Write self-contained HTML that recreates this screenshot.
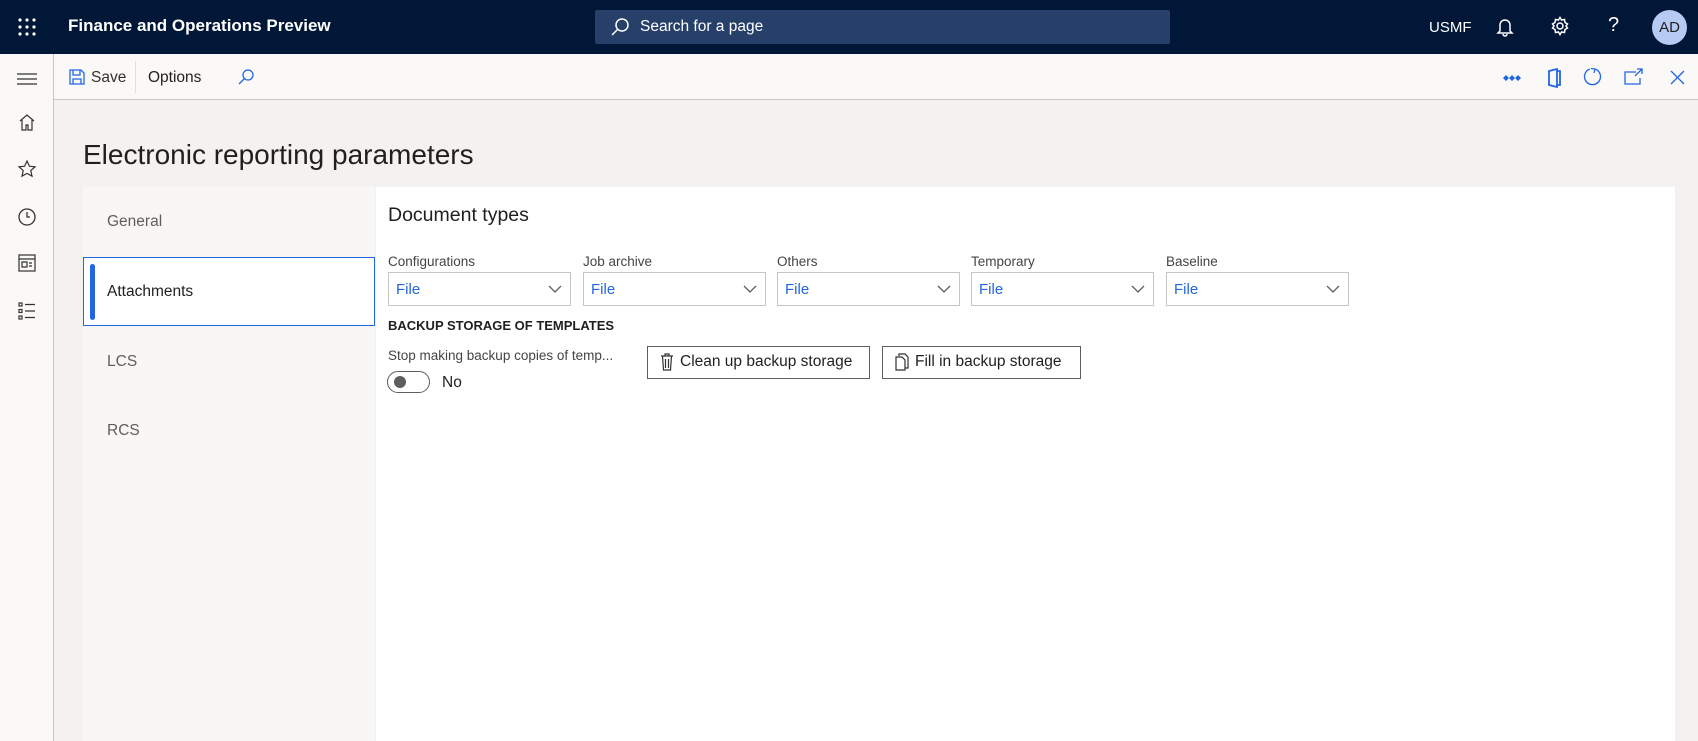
<!DOCTYPE html>
<html><head><meta charset="utf-8"><style>
*{box-sizing:border-box;margin:0;padding:0}
body{width:1698px;height:741px;overflow:hidden;background:#f3f2f1;font-family:"Segoe UI","Liberation Sans",sans-serif;color:#323130;position:relative}
.a{position:absolute}
.hdr{left:0;top:0;width:1698px;height:54px;background:#001737}
.tb{left:54px;top:54px;width:1644px;height:46px;background:#faf9f8;border-bottom:1px solid #c8c6c4}
.nav{left:0;top:54px;width:54px;height:687px;background:#faf9f8;border-right:1px solid #c8c6c4}
.dd{height:34px;width:183px;border:1px solid #c8c6c4;background:#fff;color:#2266e3;font-size:15px;padding:8px 7px}
.dd svg{position:absolute;right:8px;top:12px}
.lbl{font-size:13.5px;color:#444}
.btn{height:33px;border:1px solid #605e5c;background:#fff;font-size:15.5px;color:#201f1e;padding:6px 10px 0 12px;display:flex;gap:6px}
</style></head><body>
<div class="a hdr"></div>
<svg class="a" style="left:18px;top:18px" width="18" height="18"><g fill="#fff"><circle cx="2" cy="2" r="1.6"/><circle cx="9" cy="2" r="1.6"/><circle cx="16" cy="2" r="1.6"/><circle cx="2" cy="9" r="1.6"/><circle cx="9" cy="9" r="1.6"/><circle cx="16" cy="9" r="1.6"/><circle cx="2" cy="16" r="1.6"/><circle cx="9" cy="16" r="1.6"/><circle cx="16" cy="16" r="1.6"/></g></svg>
<div class="a" style="left:68px;top:16px;color:#fff;font-size:17px;font-weight:bold">Finance and Operations Preview</div>
<div class="a" style="left:595px;top:10px;width:575px;height:34px;background:#27406a;border-radius:2px"></div>
<svg class="a" style="left:610px;top:17px" width="20" height="20" fill="none" stroke="#fff" stroke-width="1.5"><circle cx="12" cy="8" r="6"/><path d="M8 12L2 18"/></svg>
<div class="a" style="left:640px;top:18px;color:#fff;font-size:15.5px">Search for a page</div>
<div class="a" style="left:1429px;top:19px;color:#fff;font-size:15px">USMF</div>
<svg class="a" style="left:1496px;top:17px" width="18" height="20" fill="none" stroke="#fff" stroke-width="1.5"><path d="M4 14V8a5 5 0 0110 0v6l2 2H2z M7 17a2 2 0 004 0"/></svg>
<svg class="a" style="left:1550px;top:16px" width="20" height="20" fill="none" stroke="#fff" stroke-width="1.5"><circle cx="10" cy="10" r="3"/><path d="M10 1.5l1.5 2.5 3-.5.5 3 2.5 1.5-1.5 2 1.5 2-2.5 1.5-.5 3-3-.5L10 18.5 8.5 16l-3 .5-.5-3L2.5 12 4 10 2.5 8 5 6.5l.5-3 3 .5z"/></svg>
<div class="a" style="left:1608px;top:14px;color:#fff;font-size:20px">?</div>
<div class="a" style="left:1652px;top:10px;width:35px;height:35px;border-radius:50%;background:#b5cbf3;color:#201f1e;font-size:15px;text-align:center;line-height:35px">AD</div>

<div class="a tb"></div>
<div class="a nav"></div>
<svg class="a" style="left:17px;top:72px" width="20" height="14" stroke="#323130" stroke-width="1.3"><path d="M0 2h20M0 7h20M0 12h20"/></svg>
<svg class="a" style="left:18px;top:113px" width="18" height="18" fill="none" stroke="#323130" stroke-width="1.2"><path d="M2 8L9 2l7 6M4 7v10h4v-5h2v5h4V7"/></svg>
<svg class="a" style="left:17px;top:159px" width="20" height="20" fill="none" stroke="#323130" stroke-width="1.2"><path d="M10 2l2.4 5.2 5.6.6-4.2 3.8 1.2 5.6L10 14.4 5 17.2l1.2-5.6L2 7.8l5.6-.6z"/></svg>
<svg class="a" style="left:18px;top:208px" width="18" height="18" fill="none" stroke="#323130" stroke-width="1.3"><circle cx="9" cy="9" r="8"/><path d="M9 4v5h3"/></svg>
<svg class="a" style="left:18px;top:254px" width="18" height="18" fill="none" stroke="#323130" stroke-width="1.2"><rect x="1" y="1" width="16" height="16"/><path d="M1 5h16M4 8h5v5H4zM11 9h3M11 12h3"/></svg>
<svg class="a" style="left:18px;top:302px" width="18" height="18" fill="none" stroke="#323130" stroke-width="1.2"><rect x="1" y="1" width="3" height="3"/><rect x="1" y="7.5" width="3" height="3"/><rect x="1" y="14" width="3" height="3"/><path d="M7 2.5h10M7 9h10M7 15.5h10"/></svg>

<svg class="a" style="left:69px;top:69px" width="16" height="16" fill="none" stroke="#2266e3" stroke-width="1.3"><path d="M1 1h11l3 3v11H1z M4 1v5h7V1 M4 15v-5h8v5"/></svg>
<div class="a" style="left:91px;top:69px;font-size:15.5px;color:#323130">Save</div>
<div class="a" style="left:135px;top:61px;width:1px;height:32px;background:#e1dfdd"></div>
<div class="a" style="left:148px;top:69px;font-size:15.5px;color:#201f1e">Options</div>
<svg class="a" style="left:237px;top:68px" width="18" height="18" fill="none" stroke="#2266e3" stroke-width="1.3"><circle cx="11" cy="7" r="5"/><path d="M7.5 10.5L2 16"/></svg>
<svg class="a" style="left:1503px;top:72px" width="18" height="12" fill="#2266e3"><path d="M0 6l3-3 3 3-3 3zM6 6l3-3 3 3-3 3zM12 6l3-3 3 3-3 3z"/></svg>
<svg class="a" style="left:1546px;top:68px" width="16" height="20" fill="none" stroke="#2266e3" stroke-width="1.8"><path d="M3 3l8-2v18l-8-2zM11 3h3v14h-3"/></svg>
<svg class="a" style="left:1583px;top:67px" width="20" height="20" fill="none" stroke="#2266e3" stroke-width="1.3"><path d="M7 2A8 8 0 1012 2M12 2l-1 4M12 2l-4-.5"/></svg>
<svg class="a" style="left:1624px;top:68px" width="20" height="18" fill="none" stroke="#2266e3" stroke-width="1.3"><path d="M12 4H1v12h15v-6M13 1h5v5M18 1l-7 7"/></svg>
<svg class="a" style="left:1670px;top:70px" width="15" height="15" stroke="#2266e3" stroke-width="1.3"><path d="M1 1l13 13M14 1L1 14"/></svg>

<div class="a" style="left:83px;top:139px;font-size:28px;color:#201f1e">Electronic reporting parameters</div>

<div class="a" style="left:83px;top:187px;width:292px;height:554px;background:#f8f7f6"></div>
<div class="a" style="left:83px;top:257px;width:292px;height:69px;background:#fff;border:1px solid #2266e3"></div>
<div class="a" style="left:90px;top:264px;width:5px;height:56px;background:#2266e3;border-radius:3px"></div>
<div class="a" style="left:107px;top:213px;font-size:15.5px;color:#605e5c">General</div>
<div class="a" style="left:107px;top:283px;font-size:15.5px;color:#201f1e">Attachments</div>
<div class="a" style="left:107px;top:353px;font-size:15.5px;color:#605e5c">LCS</div>
<div class="a" style="left:107px;top:422px;font-size:15.5px;color:#605e5c">RCS</div>

<div class="a" style="left:376px;top:187px;width:1299px;height:554px;background:#fff"></div>
<div class="a" style="left:388px;top:204px;font-size:19.5px;color:#201f1e">Document types</div>

<div class="a lbl" style="left:388px;top:254px">Configurations</div>
<div class="a lbl" style="left:583px;top:254px">Job archive</div>
<div class="a lbl" style="left:777px;top:254px">Others</div>
<div class="a lbl" style="left:971px;top:254px">Temporary</div>
<div class="a lbl" style="left:1166px;top:254px">Baseline</div>
<div class="a dd" style="left:388px;top:272px">File<svg width="14" height="9" fill="none" stroke="#605e5c" stroke-width="1.3"><path d="M1 1l6 6 6-6"/></svg></div>
<div class="a dd" style="left:583px;top:272px">File<svg width="14" height="9" fill="none" stroke="#605e5c" stroke-width="1.3"><path d="M1 1l6 6 6-6"/></svg></div>
<div class="a dd" style="left:777px;top:272px">File<svg width="14" height="9" fill="none" stroke="#605e5c" stroke-width="1.3"><path d="M1 1l6 6 6-6"/></svg></div>
<div class="a dd" style="left:971px;top:272px">File<svg width="14" height="9" fill="none" stroke="#605e5c" stroke-width="1.3"><path d="M1 1l6 6 6-6"/></svg></div>
<div class="a dd" style="left:1166px;top:272px">File<svg width="14" height="9" fill="none" stroke="#605e5c" stroke-width="1.3"><path d="M1 1l6 6 6-6"/></svg></div>

<div class="a" style="left:388px;top:318px;font-size:13px;font-weight:bold;color:#201f1e">BACKUP STORAGE OF TEMPLATES</div>
<div class="a lbl" style="left:388px;top:348px">Stop making backup copies of temp...</div>
<div class="a" style="left:387px;top:371px;width:43px;height:22px;border:1px solid #605e5c;border-radius:11px"></div>
<div class="a" style="left:394px;top:376px;width:12px;height:12px;border-radius:50%;background:#605e5c"></div>
<div class="a" style="left:442px;top:374px;font-size:15.5px;color:#201f1e">No</div>

<div class="a btn" style="left:647px;top:346px;width:223px"><svg width="14" height="18" fill="none" stroke="#323130" stroke-width="1.2"><path d="M1 3h12M5 3V1h4v2M2.5 3l1 14h7l1-14M5.5 6v9M8.5 6v9"/></svg>Clean up backup storage</div>
<div class="a btn" style="left:882px;top:346px;width:199px"><svg width="14" height="18" fill="none" stroke="#323130" stroke-width="1.2"><path d="M4 3V1h6l3 3v11h-3M1 4h6l3 3v10H1z"/></svg>Fill in backup storage</div>
</body></html>
